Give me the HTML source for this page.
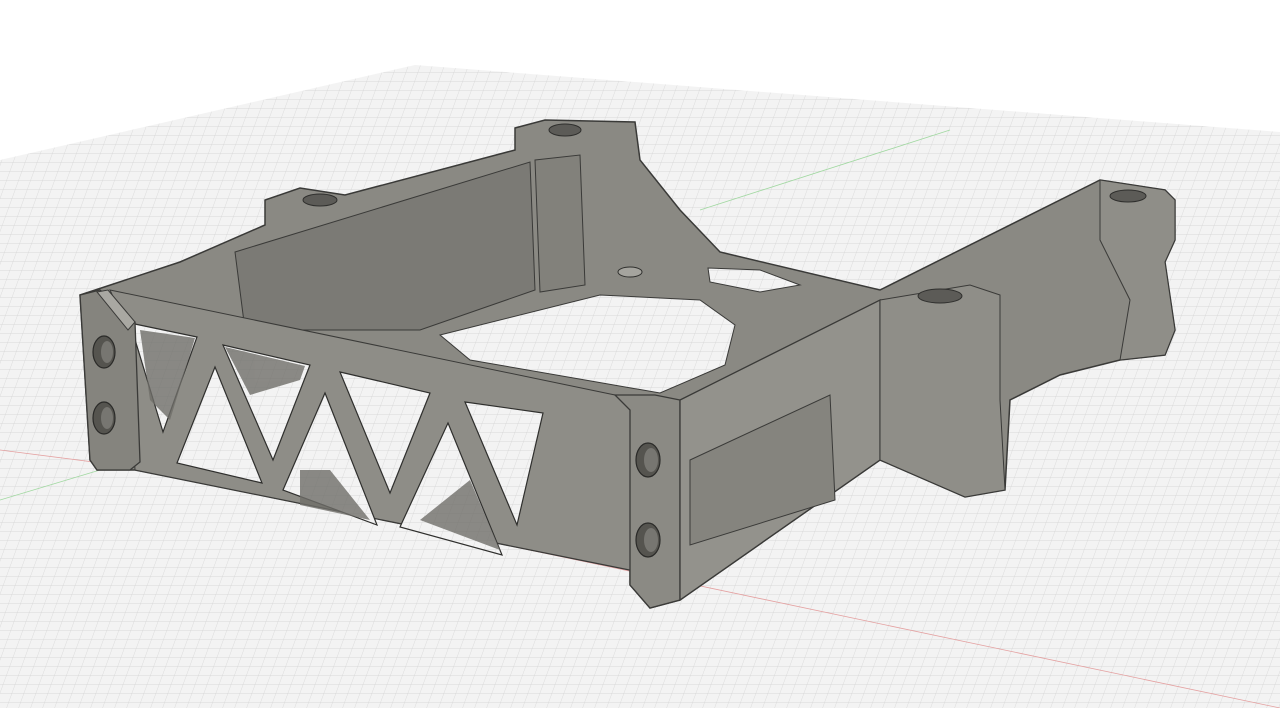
<!DOCTYPE html>
<html><head><meta charset="utf-8"><style>html,body{margin:0;padding:0;background:#fff;}svg{display:block}</style></head>
<body>
<svg width="1280" height="708" viewBox="0 0 1280 708" xmlns="http://www.w3.org/2000/svg">
<defs>
<pattern id="g" width="12" height="9" patternUnits="userSpaceOnUse" patternTransform="skewX(-20)">
<rect width="12" height="9" fill="#f3f3f3"/>
<path d="M0 0H12M0 0V9" stroke="#d6d6d6" stroke-width="0.8"/>
</pattern>
<clipPath id="plane"><polygon points="0,160 415,65 1280,132 1280,708 0,708"/></clipPath>
</defs>
<rect width="1280" height="708" fill="#ffffff"/>
<polygon points="0,160 415,65 1280,132 1280,708 0,708" fill="url(#g)"/>
<g clip-path="url(#plane)" stroke-width="0.8">
<line x1="0" y1="450" x2="140" y2="468" stroke="#e4a0a0"/>
<line x1="140" y1="468" x2="1280" y2="708" stroke="#e4a0a0"/>
<line x1="0" y1="500" x2="100" y2="470" stroke="#a0d8a0"/>
<line x1="700" y1="210" x2="950" y2="130" stroke="#a0d8a0"/>
</g>
<polygon fill="#8a8983" stroke="#3a3a38" stroke-width="1.5" points="80,295 180,262 265,225 265,200 300,188 345,195 515,150 515,128 545,120 635,122 640,160 680,210 720,252 880,290 1100,180 1165,190 1175,200 1175,240 1165,262 1175,330 1165,355 1120,360 1060,375 1010,400 1005,490 965,497 880,460 680,600 650,608 630,585 630,570 135,470 97,470 90,460"/>
<polygon fill="#7b7a75" stroke="#3a3a38" points="235,252 530,162 535,290 420,330 245,330"/>
<polygon fill="#82817b" stroke="#3a3a38" points="535,160 580,155 585,285 540,292"/>
<polygon fill="url(#g)" stroke="#3a3a38" points="440,335 600,295 700,300 735,325 725,365 660,393 470,360"/>
<polygon fill="url(#g)" stroke="#3a3a38" points="708,268 760,270 800,285 760,292 710,282"/>
<polygon fill="#8e8d87" stroke="#3a3a38" points="110,290 615,395 630,400 630,570 135,470 128,330"/>
<g fill="url(#g)" stroke="#2f2f2d" stroke-width="1.2">
<polygon points="130,323 197,337 163,432"/>
<polygon points="223,345 310,365 273,460"/>
<polygon points="340,372 430,393 390,493"/>
<polygon points="465,402 543,413 517,525"/>
<polygon points="177,463 215,367 262,483"/>
<polygon points="283,490 325,393 377,525"/>
<polygon points="400,527 448,423 502,555"/>
</g>
<g fill="#6f6e69" opacity="0.8">
<polygon points="140,330 195,338 170,420 150,400"/>
<polygon points="225,347 305,366 300,380 250,395"/>
<polygon points="300,470 330,470 370,520 300,505"/>
<polygon points="420,520 470,480 500,550"/>
</g>
<polygon fill="#85847e" stroke="#3a3a38" stroke-width="1.3" points="80,295 100,290 135,322 140,462 130,470 97,470 90,460"/>
<polygon fill="#a9a8a2" stroke="#3a3a38" points="97,292 108,290 135,322 128,330"/>
<polygon fill="#8b8a84" stroke="#3a3a38" stroke-width="1.3" points="615,395 655,395 680,400 680,600 650,608 630,585 630,410"/>
<polygon fill="#93928c" stroke="#3a3a38" stroke-width="1.3" points="680,400 880,300 880,460 680,600"/>
<polygon fill="#85847e" stroke="#3a3a38" points="690,460 830,395 835,500 690,545"/>
<polygon fill="#8f8e88" stroke="#3a3a38" points="880,300 970,285 1000,295 1000,400 1005,490 965,497 880,460"/>
<polygon fill="#8f8e88" stroke="#3a3a38" points="1100,180 1165,190 1175,200 1175,240 1165,262 1175,330 1165,355 1120,360 1130,300 1100,240"/>
<ellipse cx="940" cy="296" rx="22" ry="7" fill="#5c5b57" stroke="#2f2f2d"/>
<ellipse cx="1128" cy="196" rx="18" ry="6" fill="#5c5b57" stroke="#2f2f2d"/>
<ellipse cx="565" cy="130" rx="16" ry="6" fill="#5c5b57" stroke="#2f2f2d"/>
<ellipse cx="320" cy="200" rx="17" ry="6" fill="#5c5b57" stroke="#2f2f2d"/>
<ellipse cx="630" cy="272" rx="12" ry="5" fill="#a5a49e" stroke="#2f2f2d"/>
<g fill="#55544f" stroke="#2a2a28" stroke-width="1.2">
<ellipse cx="104" cy="352" rx="11" ry="16"/>
<ellipse cx="104" cy="418" rx="11" ry="16"/>
<ellipse cx="648" cy="460" rx="12" ry="17"/>
<ellipse cx="648" cy="540" rx="12" ry="17"/>
</g>
<g fill="#777671">
<ellipse cx="107" cy="352" rx="6" ry="11"/>
<ellipse cx="107" cy="418" rx="6" ry="11"/>
<ellipse cx="651" cy="460" rx="7" ry="12"/>
<ellipse cx="651" cy="540" rx="7" ry="12"/>
</g>
</svg>
</body></html>
